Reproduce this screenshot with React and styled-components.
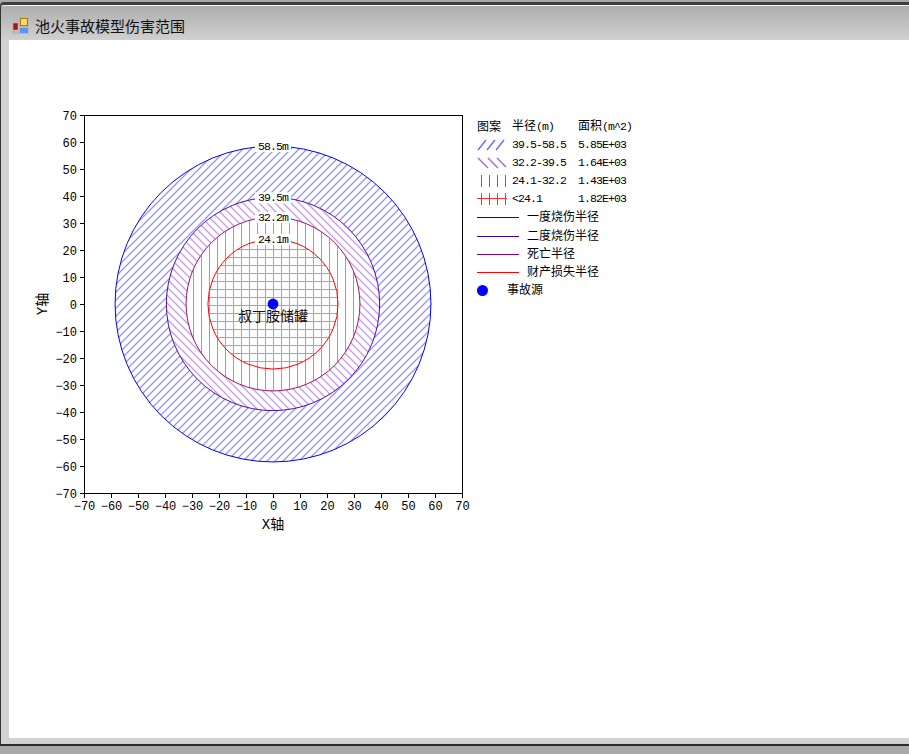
import React from "react";
import styled, { createGlobalStyle } from "styled-components";

const Global = createGlobalStyle`
  html, body { margin: 0; padding: 0; background: #a9a9a9; overflow: hidden; }
`;
const cjk = `"Liberation Sans", "Noto Sans CJK SC", sans-serif`;
const mono = `"Liberation Mono", "Noto Sans CJK SC", monospace`;

const Desktop = styled.div`
  width: 909px; height: 754px; background: #a9a9a9; overflow: hidden;
  display: flex; flex-direction: column; padding-top: 2px; box-sizing: border-box;
`;
const Window = styled.div`
  height: 744px; display: flex; flex-direction: column; box-sizing: border-box;
  border-top: 3px solid #3d3d3d; border-left: 1px solid #333; border-bottom: 2px solid #2c2c2c;
  border-top-left-radius: 4px; background: #d2d2d2; box-shadow: inset 1px 1px 0 #f2f2f2;
`;
const TitleBar = styled.div`
  height: 34px; margin-top: 1px; flex: none; display: flex; align-items: center; gap: 6px;
  padding: 5px 0 0 11px; box-sizing: border-box;
  background: linear-gradient(#aeaeae, #d0d0d0);
  font: 15px ${cjk}; color: #101010;
`;
const Frame = styled.div`
  flex: 1; min-height: 0; display: flex; padding: 0 0 6px 8px;
  background: #d2d2d2;
`;
const Canvas = styled.div`
  flex: 1; background: #fff; display: flex; align-items: flex-start; padding: 60px 0 0 21px;
`;
const ChartSvg = styled.svg`
  display: block; flex: none; width: 440px; height: 440px;
`;
const TickText = styled.text`
  font: 12px ${mono}; fill: #000; text-anchor: ${p => p.$anchor};
`;
const AxisTitle = styled.text`
  font: 14px ${mono}; fill: #000; text-anchor: middle;
`;
const RingLabel = styled.text`
  font: 11.5px ${mono}; letter-spacing: -0.9px; fill: #000; text-anchor: middle;
`;
const TankLabel = styled.text`
  font: 14px ${cjk}; fill: #111; text-anchor: middle;
`;
const Legend = styled.div`
  margin: 17px 0 0 7px; display: flex; flex-direction: column; font: 12px/18px ${cjk}; color: #000;
`;
const TableRow = styled.div`
  height: ${p => (p.$header ? 19 : 18)}px; display: grid; grid-template-columns: 35px 66px auto; align-items: center;
`;
const LineRow = styled.div`
  height: 18px; display: flex; align-items: center; gap: 8px; margin-top: ${p => p.$offset}px;
`;
const LineSample = styled.span`
  width: 42px; height: 1px; background: ${p => p.$color}; flex: none;
`;
const SourceRow = styled.div`
  height: 18px; display: flex; align-items: center; gap: 19px;
`;
const Dot = styled.span`
  width: 11px; height: 11px; border-radius: 50%; background: #0000ff; flex: none;
`;
const Latin = styled.span`
  font: 11.5px/18px ${mono}; letter-spacing: -0.9px;
`;
const Swatch = styled.svg`
  display: block; width: 30px; height: 12px;
`;

const cx = 273, cy = 304, k = 2.7;
const ticks = [];
for (let v = -70; v <= 70; v += 10) ticks.push(v);
const fmt = v => (v < 0 ? `\u2212${-v}` : `${v}`);

const Patterns = ({ id }) => (
  <defs>
    <pattern id={`${id}-a`} width="8" height="8" patternUnits="userSpaceOnUse">
      <path d="M-1 9 L9 -1 M-1 1 L1 -1 M7 9 L9 7" stroke="#9494ff" strokeWidth="1.3" />
    </pattern>
    <pattern id={`${id}-b`} width="8" height="8" patternUnits="userSpaceOnUse">
      <path d="M-1 -1 L9 9 M7 -1 L9 1 M-1 7 L1 9" stroke="#c39be6" strokeWidth="1.3" />
    </pattern>
    <pattern id={`${id}-c`} x="1" width="8" height="8" patternUnits="userSpaceOnUse">
      <rect x="0" width="1" height="8" fill="#c884b8" />
    </pattern>
    <pattern id={`${id}-d`} x="1" y="1" width="8" height="8" patternUnits="userSpaceOnUse">
      <rect x="0" width="1" height="8" fill="#ff8080" />
      <rect y="0" width="8" height="1" fill="#ff8080" />
    </pattern>
  </defs>
);

const rings = [
  { r: 58.5, p: "a", c: "#0000ff", label: "58.5m" },
  { r: 39.5, p: "b", c: "#4a0aa8", label: "39.5m" },
  { r: 32.2, p: "c", c: "#a01070", label: "32.2m" },
  { r: 24.1, p: "d", c: "#ff0000", label: "24.1m" },
];

const Chart = () => (
  <ChartSvg viewBox="30 100 440 440">
    <Patterns id="plot" />
    <rect x="84.5" y="115.5" width="378" height="378" fill="#fff" stroke="#000" />
    {rings.map(g => (
      <g key={g.r}>
        <circle cx={cx} cy={cy} r={g.r * k} fill="#fff" />
        <circle cx={cx} cy={cy} r={g.r * k} fill={`url(#plot-${g.p})`} stroke={g.c} strokeWidth="1" />
      </g>
    ))}
    {rings.map(g => {
      const y = cy - g.r * k;
      return (
        <g key={g.label}>
          <rect x={255} y={y - 5} width={36} height={11} fill="#fff" />
          <RingLabel x={273} y={y + 4}>{g.label}</RingLabel>
        </g>
      );
    })}
    <circle cx={cx} cy={cy} r="5.4" fill="#0000ff" />
    <TankLabel x={273} y={321}>叔丁胺储罐</TankLabel>
    {ticks.map(v => {
      const x = Math.round(cx + v * k) + 0.5;
      const y = Math.round(cy - v * k) + 0.5;
      return (
        <g key={v}>
          <path d={`M${x} 493 V498 M80 ${y} H84`} stroke="#000" fill="none" />
          <TickText $anchor="middle" x={x} y={510}>{fmt(v)}</TickText>
          <TickText $anchor="end" x={77} y={y + 4}>{fmt(v)}</TickText>
        </g>
      );
    })}
    <AxisTitle x={273} y={529}>X轴</AxisTitle>
    <AxisTitle transform="translate(47 304) rotate(-90)">Y轴</AxisTitle>
  </ChartSvg>
);

const PatternSwatch = ({ p }) => {
  if (p === "c") {
    return (
      <Swatch viewBox="0 0 30 12">
        {[4, 12, 20, 28].map(x => <rect key={x} x={x} y="0" width="1" height="12" fill="#c03c8c" />)}
      </Swatch>
    );
  }
  if (p === "d") {
    return (
      <Swatch viewBox="0 0 30 12">
        {[4, 12, 20, 28].map(x => <rect key={x} x={x} y="0" width="1" height="12" fill="#ff3030" />)}
        <rect x="0" y="5" width="30" height="1" fill="#ff3030" />
      </Swatch>
    );
  }
  const color = p === "a" ? "#6a6aff" : "#a868d8";
  const lines = p === "a"
    ? [[1, 11, 9, 1], [10, 11, 18, 1], [19, 11, 27, 1]]
    : [[1, 1, 11, 11], [11, 1, 21, 11], [20, 1, 29, 10]];
  return (
    <Swatch viewBox="0 0 30 12">
      {lines.map(([a, b, c, d]) => (
        <line key={a} x1={a} y1={b} x2={c} y2={d} stroke={color} strokeWidth="1.4" />
      ))}
    </Swatch>
  );
};

const tableRows = [
  { p: "a", range: "39.5-58.5", area: "5.85E+03" },
  { p: "b", range: "32.2-39.5", area: "1.64E+03" },
  { p: "c", range: "24.1-32.2", area: "1.43E+03" },
  { p: "d", range: "<24.1", area: "1.82E+03" },
];
const lineRows = [
  { c: "#0000e0", t: "一度烧伤半径", o: 0 },
  { c: "#4000a8", t: "二度烧伤半径", o: 1 },
  { c: "#900068", t: "死亡半径", o: 0 },
  { c: "#ff0000", t: "财产损失半径", o: 0 },
];

const AppIcon = () => (
  <svg width="17" height="17" viewBox="0 0 17 17">
    <rect width="17" height="17" fill="#b9b9b9" />
    <rect x="1" y="6" width="5" height="7" fill="#a81410" stroke="#d9c0b0" strokeWidth="0.5" />
    <rect x="8.5" y="1.5" width="7" height="7" fill="#ffd860" stroke="#a87810" />
    <rect x="8" y="11" width="8" height="5" fill="#5c94e8" />
  </svg>
);

export default function App() {
  return (
    <Desktop>
      <Global />
      <Window>
        <TitleBar>
          <AppIcon />
          <span>池火事故模型伤害范围</span>
        </TitleBar>
        <Frame>
          <Canvas>
            <Chart />
            <Legend>
              <TableRow $header>
                <span>图案</span>
                <span>半径<Latin>(m)</Latin></span>
                <span>面积<Latin>(m^2)</Latin></span>
              </TableRow>
              {tableRows.map(r => (
                <TableRow key={r.p}>
                  <PatternSwatch p={r.p} />
                  <Latin>{r.range}</Latin>
                  <Latin>{r.area}</Latin>
                </TableRow>
              ))}
              {lineRows.map(r => (
                <LineRow key={r.t} $offset={r.o}>
                  <LineSample $color={r.c} />
                  <span>{r.t}</span>
                </LineRow>
              ))}
              <SourceRow>
                <Dot />
                <span>事故源</span>
              </SourceRow>
            </Legend>
          </Canvas>
        </Frame>
      </Window>
    </Desktop>
  );
}
